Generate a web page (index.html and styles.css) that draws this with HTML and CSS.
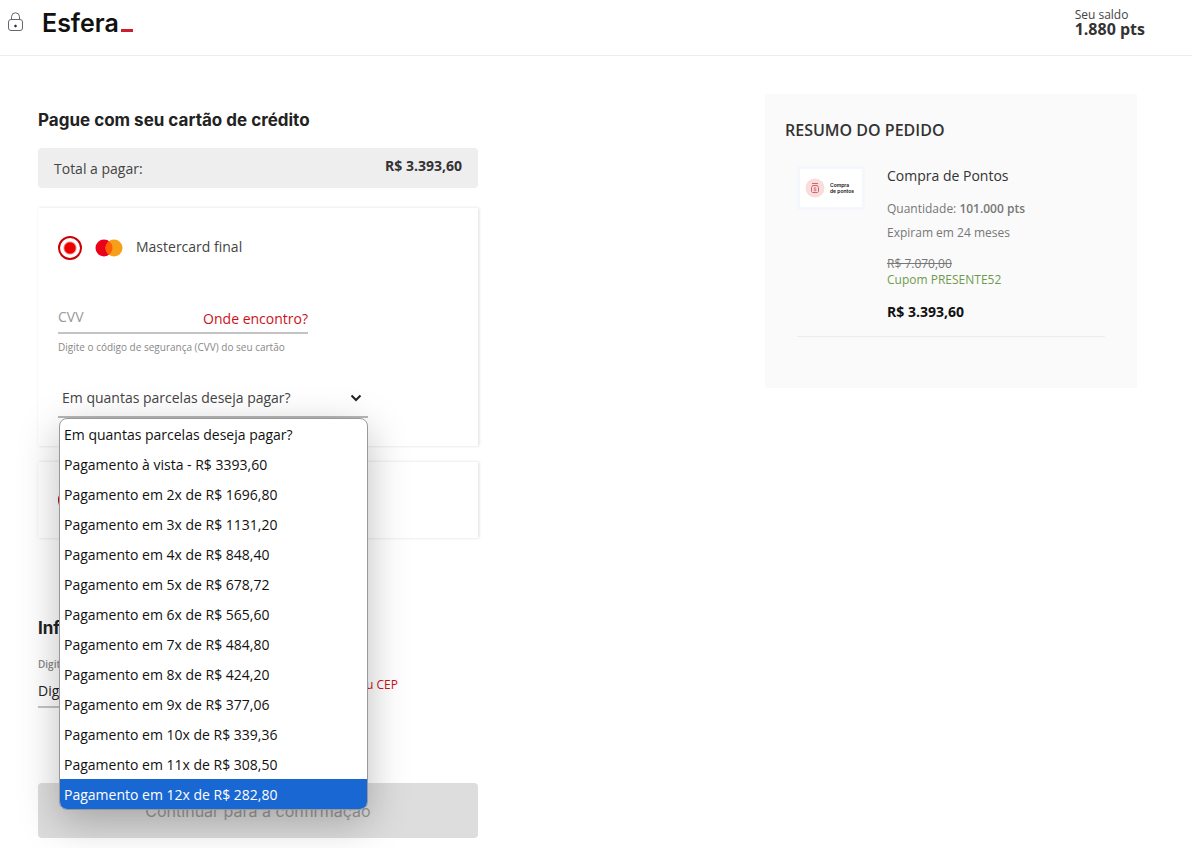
FILE: index.html
```html
<!DOCTYPE html>
<html lang="pt-BR">
<head>
<meta charset="utf-8">
<meta name="viewport" content="width=device-width, initial-scale=1">
<title>Esfera - Pagamento</title>
<link rel="stylesheet" href="styles.css">
</head>
<body>
<header class="topbar">
  <div class="brand">
    <svg class="lock" width="16" height="20" viewBox="0 0 16 20" fill="none" stroke="#66666e" aria-hidden="true">
      <rect x="0.5" y="7.5" width="14" height="11" rx="2.5"/>
      <path d="M3.500 7.500V4.800a4 4 0 0 1 8 0V7.500"/>
      <circle cx="7.500" cy="14" r="1" fill="#222" stroke="#222" stroke-width="0.600"/>
    </svg>
    <a class="logo" href="#">Esfera<span class="logo-mark"></span></a>
  </div>
  <div class="balance">
    <span class="balance-label">Seu saldo</span>
    <strong class="balance-value">1.880 pts</strong>
  </div>
</header>

<main class="page">
  <form class="checkout">
    <h1 class="heading">Pague com seu cartão de crédito</h1>
    <div class="total">
      <span>Total a pagar:</span>
      <strong class="total-value">R$ 3.393,60</strong>
    </div>

    <section class="card">
      <label class="card-choice">
        <input class="radio" type="radio" name="card" checked>
        <svg width="28" height="18" viewBox="0 0 28 18" aria-hidden="true">
          <circle cx="9" cy="9" r="8.500" fill="#eb001b"/>
          <circle cx="19" cy="9" r="8.500" fill="#f79e1b"/>
          <path d="M14 2.126a8.500 8.500 0 0 1 0 13.748a8.500 8.500 0 0 1 0-13.748z" fill="#ff5f00"/>
        </svg>
        <span class="card-name">Mastercard final</span>
      </label>
      <div class="cvv">
        <input class="cvv-input" id="cvv" type="text" placeholder="CVV" aria-label="CVV">
        <a class="link" href="#">Onde encontro?</a>
      </div>
      <label class="hint" for="cvv">Digite o código de segurança (CVV) do seu cartão</label>
      <div class="installments">
        <select class="select" aria-label="Parcelas">
          <option>Em quantas parcelas deseja pagar?</option>
        </select>
        <svg class="chevron" width="12" height="8" viewBox="0 0 12 8" fill="none" stroke="#222" stroke-width="2" aria-hidden="true"><path d="M1.500 1.500L6 6l4.500-4.500"/></svg>
        <ul class="menu" role="listbox" aria-label="Parcelas">
          <li class="option" role="option">Em quantas parcelas deseja pagar?</li>
          <li class="option" role="option">Pagamento à vista - R$ 3393,60</li>
          <li class="option" role="option">Pagamento em 2x de R$ 1696,80</li>
          <li class="option" role="option">Pagamento em 3x de R$ 1131,20</li>
          <li class="option" role="option">Pagamento em 4x de R$ 848,40</li>
          <li class="option" role="option">Pagamento em 5x de R$ 678,72</li>
          <li class="option" role="option">Pagamento em 6x de R$ 565,60</li>
          <li class="option" role="option">Pagamento em 7x de R$ 484,80</li>
          <li class="option" role="option">Pagamento em 8x de R$ 424,20</li>
          <li class="option" role="option">Pagamento em 9x de R$ 377,06</li>
          <li class="option" role="option">Pagamento em 10x de R$ 339,36</li>
          <li class="option" role="option">Pagamento em 11x de R$ 308,50</li>
          <li class="option option-active" role="option" aria-selected="true">Pagamento em 12x de R$ 282,80</li>
        </ul>
      </div>
    </section>

    <section class="card card-other">
      <input class="radio" type="radio" name="card" aria-label="Outro">
    </section>

    <h2 class="heading heading-address">Inf</h2>
    <label class="hint hint-strong" for="cep">Digit</label>
    <div class="cep">
      <input class="cep-input" id="cep" type="text" placeholder="Dig">
      <a class="link link-small" href="#">u CEP</a>
    </div>

    <button class="submit" type="submit" disabled>Continuar para a confirmação</button>
  </form>

  <aside class="summary">
    <h2 class="summary-title">RESUMO DO PEDIDO</h2>
    <div class="product">
      <div class="thumb">
        <svg width="20" height="20" viewBox="0 0 20 20" fill="none" stroke="#d4656c" aria-hidden="true">
          <circle cx="10" cy="10" r="9.500" fill="#f9dcdc" stroke="none"/>
          <path d="M7 5.500h6M7.500 7.500h5M7.800 7.500L6.500 9.500v4l1 1h5l1-1v-4l-1.300-2"/>
          <path d="M11.300 9.800H9.200v1.400h1.700v1.500H8.700" stroke-width="0.800"/>
        </svg>
        <span class="thumb-text">Compra<br>de pontos</span>
      </div>
      <div class="details">
        <h3 class="product-name">Compra de Pontos</h3>
        <p class="detail">Quantidade: <strong class="quantity">101.000 pts</strong></p>
        <p class="detail">Expiram em 24 meses</p>
        <p class="prices"><s>R$ 7.070,00</s><br><span class="coupon">Cupom PRESENTE52</span></p>
        <strong class="final-price">R$ 3.393,60</strong>
      </div>
    </div>
  </aside>
</main>
</body>
</html>
```
FILE: styles.css
```css
* {
  box-sizing: border-box;
}

body {
  margin: 0;
  background: #fff;
  color: #444;
  font: 14px/20px "Open Sans", "Noto Sans", sans-serif;
}

h1, h2, h3, p, ul {
  margin: 0;
  padding: 0;
}

input, select, button {
  font: inherit;
  color: inherit;
}

a {
  text-decoration: none;
}

.topbar {
  display: flex;
  justify-content: space-between;
  align-items: flex-start;
  height: 56px;
  padding: 8px 47px 0 8px;
  border-bottom: 1px solid #ececec;
}

.brand {
  display: flex;
  align-items: flex-start;
  gap: 18px;
}

.lock {
  margin-top: 4px;
}

.logo {
  display: flex;
  align-items: baseline;
  gap: 2px;
  color: #111;
  font: 600 25px/30px Inter, sans-serif;
}

.logo-mark {
  width: 12px;
  height: 3px;
  background: #cc2030;
}

.balance {
  display: flex;
  flex-direction: column;
}

.balance-label {
  font-size: 12px;
  line-height: 14px;
}

.balance-value {
  color: #333;
  font-size: 16px;
  line-height: 15px;
}

.page {
  display: flex;
  justify-content: space-between;
  align-items: flex-start;
  gap: 32px;
  padding: 38px 55px 10px 38px;
}

.checkout {
  flex: 0 1 440px;
  padding-top: 14px;
}

.heading {
  margin-bottom: 16px;
  color: #222;
  font: 700 17px/24px Inter, sans-serif;
}

.total {
  display: flex;
  justify-content: space-between;
  height: 40px;
  margin-bottom: 20px;
  padding: 0 16px;
  border-radius: 4px;
  background: #eee;
  line-height: 42px;
}

.total-value {
  color: #333;
  line-height: 36px;
}

.card {
  margin-bottom: 16px;
  padding: 28px 20px;
  box-shadow: 1px 0 3px rgba(0, 0, 0, 0.14);
}

.card-other {
  padding: 26px 20px;
}

.card-choice {
  display: flex;
  align-items: center;
  gap: 13px;
}

.card-name {
  line-height: 20px;
  padding-bottom: 2px;
}

.radio {
  display: block;
  flex: none;
  appearance: none;
  width: 24px;
  height: 24px;
  margin: 0;
  border: 2px solid #c00;
  border-radius: 50%;
  background: #fff;
}

.radio:checked {
  background: radial-gradient(circle, #ec0000 5px, #fff 7px);
}

.cvv {
  display: flex;
  justify-content: space-between;
  max-width: 250px;
  height: 34px;
  margin: 40px 0 5px;
  border-bottom: 2px solid #c4c4c4;
}

.cvv-input {
  flex: 1;
  min-width: 0;
  padding: 2px 0 0;
  border: 0;
  background: none;
}

.cvv-input::placeholder {
  color: #999;
}

.link {
  color: #cc1018;
  line-height: 38px;
}

.link-small {
  font-size: 12px;
  line-height: 18px;
}

.hint {
  display: block;
  color: #888;
  font-size: 10px;
  line-height: 16px;
}

.hint-strong {
  font-weight: 600;
}

.installments {
  position: relative;
  max-width: 310px;
  margin-top: 24px;
}

.select {
  display: block;
  appearance: none;
  width: 100%;
  height: 39px;
  padding: 0 28px 0 4px;
  border: 0;
  border-bottom: 2px solid #b8b8b8;
  border-radius: 0;
  background: none;
}

.chevron {
  position: absolute;
  top: 15px;
  right: 6px;
}

.menu {
  position: absolute;
  top: 100%;
  left: 1px;
  right: 0;
  z-index: 1;
  overflow: hidden;
  border: 1px solid #999;
  border-radius: 8px;
  background: #fff;
  box-shadow: 0 12px 40px rgba(0, 0, 0, 0.26);
  list-style: none;
}

.option {
  padding: 2px 4px 0;
  color: #111;
  line-height: 28px;
}

.option-active {
  background: #1967d2;
  color: #fff;
}

.heading-address {
  margin-top: 78px;
}

.cep {
  display: flex;
  justify-content: space-between;
  max-width: 360px;
  height: 32px;
  margin-top: 4px;
}

.cep-input {
  width: 250px;
  min-width: 0;
  padding: 0;
  border: 0;
  border-bottom: 2px solid #c4c4c4;
  background: none;
}

.cep-input::placeholder {
  color: #222;
}

.submit {
  width: 100%;
  height: 55px;
  margin-top: 75px;
  border: 0;
  border-radius: 4px;
  background: #ddd;
  color: #999;
  font: 16px/24px Inter, sans-serif;
}

.summary {
  flex: 0 1 372px;
  min-height: 294px;
  padding: 24px 20px;
  background: #fafafa;
}

.summary-title {
  margin-bottom: 24px;
  color: #333;
  font-size: 16px;
  font-weight: 600;
  line-height: 24px;
}

.product {
  display: flex;
  gap: 22px;
  margin: 0 12px;
  padding-bottom: 14px;
  border-bottom: 1px solid #ececec;
}

.thumb {
  display: flex;
  flex: none;
  align-items: center;
  gap: 5px;
  width: 68px;
  height: 44px;
  padding-left: 5px;
  border: 3px solid #f4f8fd;
  background: #fff;
}

.thumb-text {
  color: #111;
  font: 600 5px/6px Inter, sans-serif;
}

.product-name {
  margin-bottom: 11px;
  color: #333;
  font-size: 14px;
  font-weight: 500;
  line-height: 20px;
}

.detail {
  color: #777;
  font-size: 12px;
  line-height: 24px;
}

.quantity {
  font-weight: 600;
}

.prices {
  margin: 11px 0 14px;
  color: #777;
  font-size: 12px;
  line-height: 16px;
}

.coupon {
  color: #6f9a4e;
}

.final-price {
  display: block;
  color: #111;
  line-height: 20px;
}
```
